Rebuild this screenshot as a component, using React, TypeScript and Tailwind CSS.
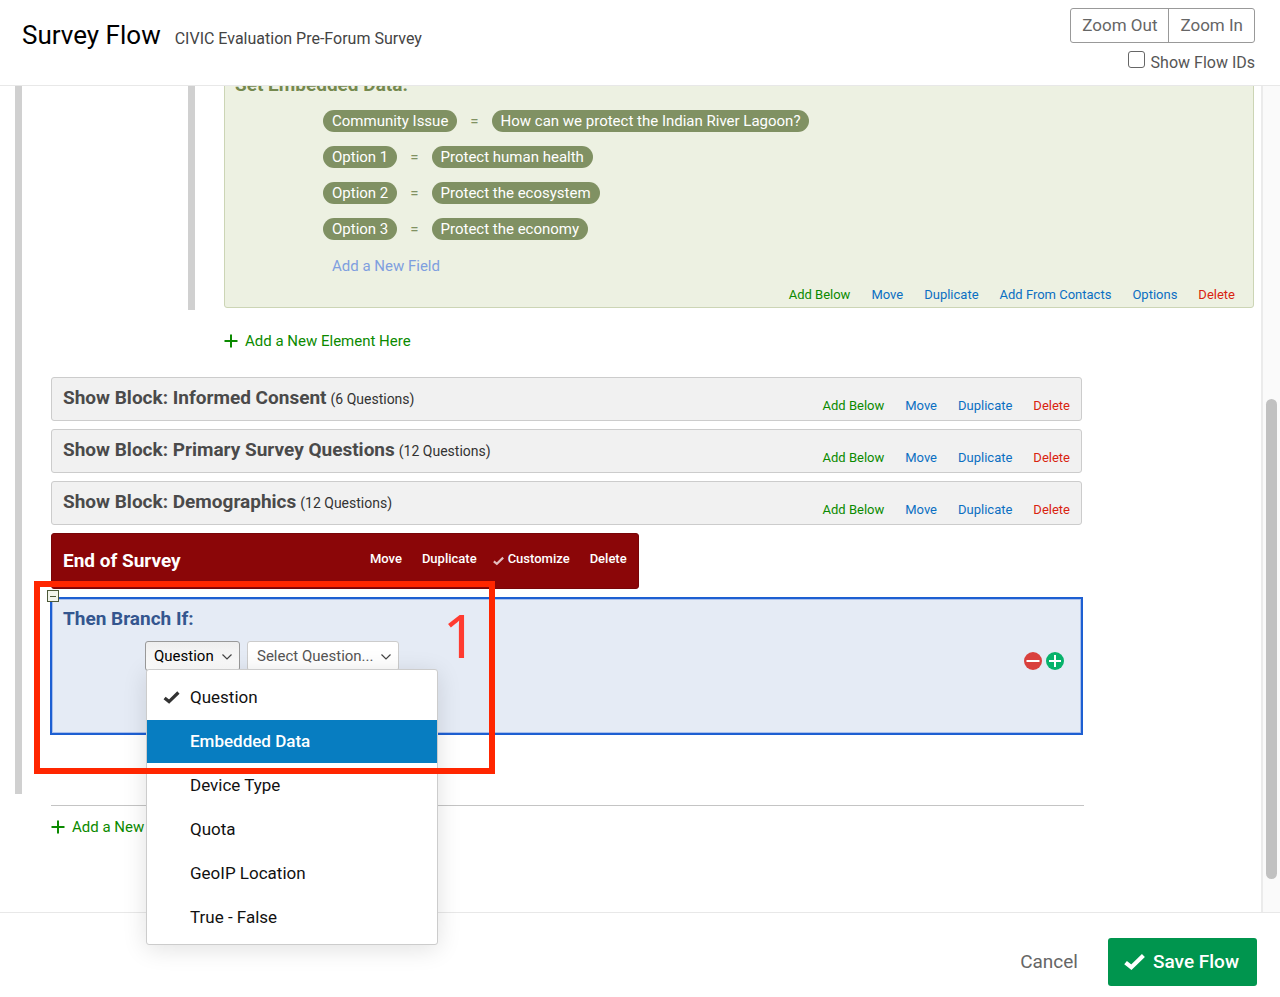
import type { ReactNode } from 'react'

const fields = [
  { name: 'Community Issue', value: 'How can we protect the Indian River Lagoon?' },
  { name: 'Option 1', value: 'Protect human health' },
  { name: 'Option 2', value: 'Protect the ecosystem' },
  { name: 'Option 3', value: 'Protect the economy' },
]

const blocks = [
  { name: 'Informed Consent', count: 6 },
  { name: 'Primary Survey Questions', count: 12 },
  { name: 'Demographics', count: 12 },
]

const branchTypes = ['Question', 'Embedded Data', 'Device Type', 'Quota', 'GeoIP Location', 'True - False']

const actionColors: Record<string, string> = {
  'Add Below': 'text-[#0b8a00]',
  Delete: 'text-[#d9230f]',
}

function CheckIcon({ className }: { className: string }) {
  return (
    <svg className={className} viewBox="0 0 20 16" fill="none" stroke="currentColor" strokeWidth="4">
      <path d="M1.5 8.5L7 13L18.5 1.8" />
    </svg>
  )
}

function Chevron() {
  return (
    <svg className="pointer-events-none absolute right-2 top-3 h-2 w-2.5" viewBox="0 0 10 8" fill="none" stroke="#444" strokeWidth="1.2">
      <path d="M0.5 1.5L5 6l4.500-4.500" />
    </svg>
  )
}

function Actions({ items }: { items: string[] }) {
  return (
    <div className="flex gap-[21px] text-[13px] leading-[18px]">
      {items.map((item) => (
        <a key={item} href="#" className={actionColors[item] ?? 'text-[#0b6fc2]'}>
          {item}
        </a>
      ))}
    </div>
  )
}

function Pill({ children }: { children: ReactNode }) {
  return (
    <button className="h-[22px] rounded-full bg-[#809163] px-[9px] text-[15px] leading-[22px] text-white">
      {children}
    </button>
  )
}

function AddElement({ label }: { label: string }) {
  return (
    <a href="#" className="inline-flex items-center gap-[7px] text-[15px] leading-5 text-[#0b8a00]">
      <svg className="h-3.5 w-3.5" viewBox="0 0 14 14" fill="none" stroke="currentColor" strokeWidth="2">
        <path d="M7 0.5v13M0.5 7h13" />
      </svg>
      {label}
    </a>
  )
}

function EmbeddedData() {
  return (
    <section className="rounded-[3px] border border-[#ccd5b5] bg-[#edf1e2] pt-1.5 pb-0.5">
      <h2 className="px-2.5 text-[19px] leading-6 font-bold text-[#75894f]">Set Embedded Data:</h2>
      <div className="mt-1.5 pl-[98px]">
        {fields.map((field) => (
          <div key={field.name} className="flex h-9 items-center gap-3 text-[15px] text-[#809163]">
            <Pill>{field.name}</Pill>
            <span className="px-px">=</span>
            <Pill>{field.value}</Pill>
          </div>
        ))}
        <a href="#" className="flex h-[38px] items-center pl-[9px] text-[15px] text-[#7f9fdf]">
          Add a New Field
        </a>
      </div>
      <div className="flex h-5 items-center justify-end pr-[18px]">
        <Actions items={['Add Below', 'Move', 'Duplicate', 'Add From Contacts', 'Options', 'Delete']} />
      </div>
    </section>
  )
}

function EndOfSurvey() {
  return (
    <section className="flex h-14 w-[57%] items-center justify-between rounded-[3px] border border-[#780508] bg-[#8b0608] px-[11px] text-white">
      <h2 className="text-[19px] leading-6 font-bold">End of Survey</h2>
      <div className="flex gap-5 pb-1 text-[13px] leading-[18px] font-medium">
        <a href="#">Move</a>
        <div className="flex gap-4">
          <a href="#">Duplicate</a>
          <a href="#" className="flex items-center gap-1">
            <CheckIcon className="mt-1 h-2.5 w-[11px] text-[#e3bdbe]" />
            Customize
          </a>
        </div>
        <a href="#">Delete</a>
      </div>
    </section>
  )
}

function BranchMenu() {
  return (
    <ul
      role="listbox"
      aria-label="Branch type options"
      className="absolute top-7 left-px z-20 flex w-[292px] flex-col gap-px rounded-[3px] border border-[#ccc] bg-white pt-1.5 pb-[5px] shadow-[0_4px_24px_rgba(0,0,0,0.12)]"
    >
      {branchTypes.map((type) => (
        <li key={type} role="option" aria-selected={type === 'Question'}>
          <button
            className={
              type === 'Embedded Data'
                ? 'flex h-[43px] w-full items-center bg-[#077dc1] text-[17px] font-medium text-white'
                : 'flex h-[43px] w-full items-center text-[17px] text-[#111]'
            }
          >
            <span className="flex w-[43px] justify-center pl-1.5">
              {type === 'Question' && <CheckIcon className="h-[13px] w-[17px] text-[#333]" />}
            </span>
            {type}
          </button>
        </li>
      ))}
    </ul>
  )
}

function Branch() {
  return (
    <section className="relative -mx-px h-[138px] border-2 border-[#1d5fd2] bg-[#e5ebf5] pt-2 pl-[11px] shadow-[inset_0_0_0_1px_#a9bfec]">
      <button
        aria-label="Collapse branch"
        className="absolute -top-[9px] -left-[5px] flex h-3 w-3 items-center justify-center border border-[#4d5939] bg-[#f3f5ec]"
      >
        <span className="h-px w-1.5 bg-[#4d5939]" />
      </button>
      <h2 className="text-[19px] leading-6 font-bold text-[#34568f]">Then Branch If:</h2>
      <div className="flex justify-between pt-2.5 pr-[17px] pl-[82px]">
        <div className="flex gap-[7px] text-[15px]">
          <div className="relative">
            <select
              aria-label="Branch type"
              className="h-[30px] w-[95px] appearance-none rounded-[3px] border border-[#999] bg-linear-to-b from-[#eee] to-white pl-2 text-black"
            >
              <option>Question</option>
            </select>
            <Chevron />
            <BranchMenu />
          </div>
          <div className="relative">
            <select
              aria-label="Question"
              className="h-[30px] w-[152px] appearance-none rounded-[3px] border border-[#ccc] bg-white pl-[9px] text-[#555]"
            >
              <option>Select Question...</option>
            </select>
            <Chevron />
          </div>
        </div>
        <div className="flex gap-1 pt-2.5">
          <button aria-label="Remove condition">
            <svg className="h-[18px] w-[18px]" viewBox="0 0 18 18" stroke="#fff" strokeWidth="2">
              <circle cx="9" cy="9" r="9" fill="#d9403d" stroke="none" />
              <path d="M2.5 9h13" />
            </svg>
          </button>
          <button aria-label="Add condition">
            <svg className="h-[18px] w-[18px]" viewBox="0 0 18 18" stroke="#fff" strokeWidth="2">
              <circle cx="9" cy="9" r="9" fill="#07b26b" stroke="none" />
              <path d="M3 9h12M9 3v12" />
            </svg>
          </button>
        </div>
      </div>
      {/* step callout over the branch */}
      <div className="pointer-events-none absolute -top-[18px] -left-[18px] z-30 flex h-[193px] w-[461px] justify-end border-6 border-[#ff2600] pt-3 pr-3 font-['Noto_Sans'] text-[60px] leading-[72px] text-[#ff3b30]">
        1
      </div>
    </section>
  )
}

export default function App() {
  return (
    <div className="flex h-screen flex-col overflow-hidden bg-white font-[Roboto,sans-serif] text-[#333]">
      <header className="z-10 flex h-[86px] shrink-0 justify-between border-b border-[#e8e8e8] bg-white pt-2 pr-[25px] pl-[22px]">
        <div className="flex items-baseline gap-3.5 pt-[11px]">
          <h1 className="text-[26px] leading-8 text-black">Survey Flow</h1>
          <p className="text-base text-[#444]">CIVIC Evaluation Pre-Forum Survey</p>
        </div>
        <div className="flex flex-col items-end gap-2">
          <div className="flex h-[35px] divide-x divide-[#999] rounded-[3px] border border-[#999] text-[17px] text-[#666]">
            <button className="px-[11px]">Zoom Out</button>
            <button className="px-[11px]">Zoom In</button>
          </div>
          <label className="flex gap-1.5 text-base text-[#555]">
            <input type="checkbox" className="h-[17px] w-[17px] appearance-none rounded-[3px] border border-[#666] bg-white" />
            Show Flow IDs
          </label>
        </div>
      </header>

      <main className="flex min-h-0 flex-1">
        <div className="-mt-5 min-w-0 flex-1 pr-[7px] pl-[15px]">
          <div className="border-l-[7px] border-[#d0d0d0] pb-[59px] pl-[29px]">
            <div className="ml-[137px] border-l-[7px] border-[#d0d0d0] pb-0.5 pl-[29px]">
              <EmbeddedData />
            </div>
            <div className="mt-[21px] flex pl-[173px]">
              <AddElement label="Add a New Element Here" />
            </div>

            <div className="mt-[26px] mr-[172px] flex flex-col gap-2">
              {blocks.map((block) => (
                <section
                  key={block.name}
                  className="flex h-11 items-end justify-between rounded-[3px] border border-[#ccc] bg-[#f1f1f1] px-[11px] pb-[5px]"
                >
                  <div className="flex items-baseline gap-1 pb-[5px]">
                    <h2 className="text-[19px] leading-6 font-bold text-[#4a4a4a]">Show Block: {block.name}</h2>
                    <span className="text-sm">({block.count} Questions)</span>
                  </div>
                  <Actions items={['Add Below', 'Move', 'Duplicate', 'Delete']} />
                </section>
              ))}
              <EndOfSurvey />
              <Branch />
            </div>
          </div>

          <div className="mt-[11px] mr-[170px] ml-9 flex border-t border-[#c4c4c4] pt-[11px]">
            <AddElement label="Add a New" />
          </div>
        </div>

        {/* scroll track */}
        <div className="flex w-[19px] shrink-0 justify-center border-l-2 border-[#ebebeb] bg-[#fafafa]">
          <div className="mt-[313px] h-[480px] w-[11px] rounded-full bg-[#c1c1c1]" />
        </div>
      </main>

      <footer className="flex h-[85px] shrink-0 items-start justify-end gap-[30px] border-t border-[#e8e8e8] pt-[25px] pr-[23px] text-[19px]">
        <button className="h-12 text-[#666]">Cancel</button>
        <button className="flex h-12 items-center gap-2 rounded-[3px] bg-[#00954e] pr-[18px] pl-4 font-medium text-white">
          <CheckIcon className="h-[18px] w-[21px]" />
          Save Flow
        </button>
      </footer>
    </div>
  )
}
